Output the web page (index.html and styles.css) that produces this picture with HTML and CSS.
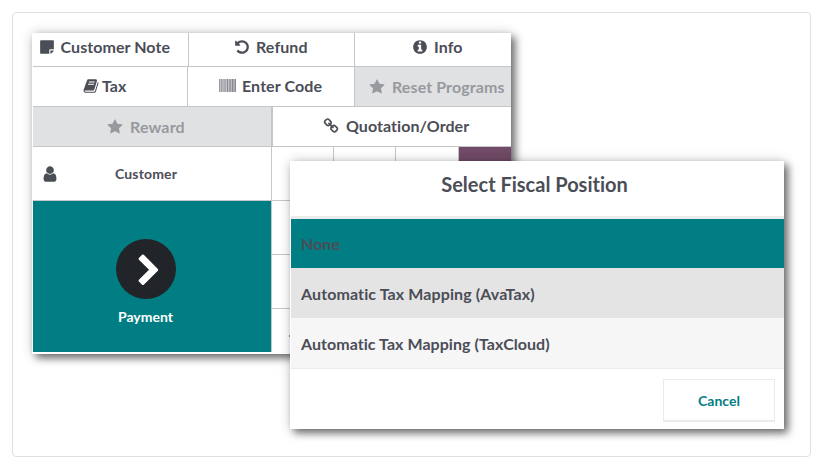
FILE: index.html
```html
<!DOCTYPE html>
<html lang="en">
<head>
<meta charset="utf-8">
<title>Point of Sale</title>
<link rel="stylesheet" href="styles.css">
</head>
<body>
<main class="frame">
  <section class="pos">
    <div class="row row-first">
      <div class="btn note"><svg class="icon" viewBox="0 0 1792 1792"><path d="M1152 1248v416h-928q-40 0-68-28t-28-68v-1344q0-40 28-68t68-28h1344q40 0 68 28t28 68v928h-416q-40 0-68 28t-28 68zm128 32h381q-15 82-65 132l-184 184q-50 50-132 65v-381z"/></svg><span>Customer Note</span></div>
      <div class="btn refund"><svg class="icon" viewBox="0 0 1792 1792"><path d="M1664 896q0 156-61 298t-164 245-245 164-298 61q-172 0-327-72.500t-264-204.500q-7-10-6.500-22.500t8.500-20.500l137-138q10-9 25-9 16 2 23 12 73 95 179 147t225 52q104 0 198.500-40.500t163.500-109.500 109.500-163.500 40.500-198.500-40.500-198.500-109.500-163.500-163.500-109.500-198.500-40.500q-98 0-188 35.500t-160 101.500l137 138q31 30 14 69-17 40-59 40h-448q-26 0-45-19t-19-45v-448q0-42 40-59 39-17 69 14l130 129q107-101 244.500-156.500t284.500-55.500q156 0 298 61t245 164 164 245 61 298z"/></svg><span>Refund</span></div>
      <div class="btn info"><svg class="icon" viewBox="0 0 1792 1792"><path d="M1152 1376v-160q0-14-9-23t-23-9h-96v-512q0-14-9-23t-23-9h-320q-14 0-23 9t-9 23v160q0 14 9 23t23 9h96v320h-96q-14 0-23 9t-9 23v160q0 14 9 23t23 9h448q14 0 23-9t9-23zm-128-896v-160q0-14-9-23t-23-9h-192q-14 0-23 9t-9 23v160q0 14 9 23t23 9h192q14 0 23-9t9-23zm640 416q0 209-103 385.500t-279.500 279.500-385.500 103-385.500-103-279.500-279.500-103-385.500 103-385.500 279.500-279.500 385.500-103 385.500 103 279.500 279.500 103 385.500z"/></svg><span>Info</span></div>
    </div>
    <div class="row row-second">
      <div class="btn tax"><svg class="icon" viewBox="0 0 1792 1792"><path d="M1703 478q40 57 18 129l-275 906q-19 64-76.500 107.500t-122.500 43.500h-923q-77 0-148.500-53.500t-99.500-131.500q-24-67-2-127 0-4 3-27t4-37q1-8-3-21.500t-3-19.500q2-11 8-21t16.500-23.500 16.500-23.500q23-38 45-91.500t30-91.500q3-10 .5-30t-.5-28q3-11 17-28t17-23q21-36 42-92t25-90q1-9-2.500-32t.5-28q4-13 22-30.500t22-22.500q19-26 42.500-84.500t27.500-96.500q1-8-3-25.500t-2-26.500q2-8 9-18t18-23 17-21q8-12 16.500-30.500t15-35 16-36 19.500-32 26.500-23.500 36-11.500 47.500 5.500l-1 3q38-9 51-9h761q74 0 114 56t18 130l-274 906q-36 119-71.500 153.500t-128.500 34.500h-869q-27 0-38 15-11 16-1 43 24 70 144 70h923q29 0 56-15.500t35-41.500l300-987q7-22 5-57 38 15 59 43zm-1064 2q-4 13 2 22.500t20 9.500h608q13 0 25.500-9.500t16.500-22.500l21-64q4-13-2-22.500t-20-9.500h-608q-13 0-25.500 9.500t-16.500 22.500zm-83 256q-4 13 2 22.500t20 9.500h608q13 0 25.500-9.500t16.500-22.500l21-64q4-13-2-22.500t-20-9.500h-608q-13 0-25.500 9.500t-16.500 22.500z"/></svg><span>Tax</span></div>
      <div class="btn code"><svg class="icon barcode" viewBox="0 0 17 13"><path opacity=".4" d="M0 0h1v13H0zM1.700 0h1.200v13H1.700zM3.500 0h1v13h-1zM5 0h.7v13H5z"/><path opacity=".55" d="M6.500 0h.7v13h-.7zM8 0h1.200v13H8zM10 0h.7v13H10zM11.300 0h1v13h-1zM13 0h1v13h-1zM14.500 0h.6v13h-.6zM15.600 0H17v13h-1.400z"/><path opacity=".25" d="M0 0h17v13H0z"/></svg><span>Enter Code</span></div>
      <div class="btn reset off"><svg class="icon" viewBox="0 0 1792 1792"><path d="M1728 647q0 22-26 48l-363 354 86 500q1 7 1 20 0 21-10.500 35.500t-30.500 14.500q-19 0-40-12l-449-236-449 236q-22 12-40 12-21 0-31.500-14.500t-10.500-35.500q0-6 2-20l86-500-364-354q-25-27-25-48 0-37 56-46l502-73 225-455q19-41 49-41t49 41l225 455 502 73q56 9 56 46z"/></svg><span>Reset Programs</span></div>
    </div>
    <div class="row row-third">
      <div class="btn reward off"><svg class="icon" viewBox="0 0 1792 1792"><path d="M1728 647q0 22-26 48l-363 354 86 500q1 7 1 20 0 21-10.500 35.500t-30.500 14.500q-19 0-40-12l-449-236-449 236q-22 12-40 12-21 0-31.500-14.500t-10.500-35.500q0-6 2-20l86-500-364-354q-25-27-25-48 0-37 56-46l502-73 225-455q19-41 49-41t49 41l225 455 502 73q56 9 56 46z"/></svg><span>Reward</span></div>
      <div class="btn order"><svg class="icon" viewBox="0 0 1792 1792"><path d="M1520 1216q0-40-28-68l-208-208q-28-28-68-28-42 0-72 32 3 3 19 18.500t21.500 21.500 15 19 13 25.500 3.500 27.500q0 40-28 68t-68 28q-15 0-27.500-3.500t-25.500-13-19-15-21.500-21.500-18.500-19q-33 31-33 73 0 40 28 68l206 207q27 27 68 27 40 0 68-26l147-146q28-28 28-67zm-703-705q0-40-28-68l-206-207q-28-28-68-28-39 0-68 27l-147 146q-28 28-28 67 0 40 28 68l208 208q27 27 68 27 42 0 72-31-3-3-19-18.500t-21.500-21.500-15-19-13-25.500-3.500-27.500q0-40 28-68t68-28q15 0 27.500 3.500t25.500 13 19 15 21.500 21.500 18.500 19q33-31 33-73zm895 705q0 120-85 203l-147 146q-83 83-203 83-121 0-204-85l-206-207q-83-83-83-203 0-123 88-209l-88-88q-86 88-208 88-120 0-204-84l-208-208q-84-84-84-204t85-203l147-146q83-83 203-83 121 0 204 85l206 207q83 83 83 203 0 123-88 209l88 88q86-88 208-88 120 0 204 84l208 208q84 84 84 204z"/></svg><span>Quotation/Order</span></div>
    </div>
    <div class="pad">
      <div class="actions">
        <div class="customer"><svg class="user" viewBox="0 0 1792 1792"><path d="M1536 1399q0 109-62.500 187t-150.500 78h-854q-88 0-150.500-78t-62.500-187q0-85 8.500-160.500t31.500-152 58.500-131 94-89 134.500-34.500q131 128 313 128t313-128q76 0 134.500 34.500t94 89 58.500 131 31.500 152 8.500 160.500zm-256-887q0 159-112.500 271.500t-271.500 112.500-271.500-112.500-112.500-271.500 112.500-271.500 271.500-112.500 271.500 112.500 112.500 271.500z"/></svg><span>Customer</span></div>
        <div class="payment">
          <div class="disc"><svg viewBox="0 0 1792 1792"><path d="M1363 877l-742 742q-19 19-45 19t-45-19l-166-166q-19-19-19-45t19-45l531-531-531-531q-19-19-19-45t19-45l166-166q19-19 45-19t45 19l742 742q19 19 19 45t-19 45z"/></svg></div>
          <span>Payment</span>
        </div>
      </div>
      <div class="keys">
        <i></i><i></i><i></i><i class="mode"></i>
        <i></i><i></i><i></i><i></i>
        <i></i><i></i><i></i><i></i>
        <i class="sign"></i><i></i><i></i><i></i>
      </div>
    </div>
  </section>
  <section class="dialog">
    <header>Select Fiscal Position</header>
    <ul>
      <li class="selected">None</li>
      <li class="hover">Automatic Tax Mapping (AvaTax)</li>
      <li>Automatic Tax Mapping (TaxCloud)</li>
    </ul>
    <footer><button>Cancel</button></footer>
  </section>
</main>
</body>
</html>
```
FILE: styles.css
```css
* { box-sizing: border-box; }
body {
  margin: 0;
  padding: 12px;
  background: #fff;
  color: #4b4d57;
  font: bold 16px/20px Lato, sans-serif;
  font-variant-ligatures: none;
}
.frame {
  position: relative;
  width: 799px;
  height: 445px;
  padding: 21px 20px;
  border: 1px solid #dee0e2;
  border-radius: 4px;
}
svg { display: block; fill: currentColor; flex: none; }
.pos {
  width: 479px;
  height: 321px;
  margin-left: -1px;
  padding-left: 1px;
  margin-top: -1px;
  background: #fff;
  box-shadow: 4px 4px 8px rgba(0, 0, 0, .55), 0 0 12px rgba(0, 0, 0, .16);
}
.row { display: flex; border-bottom: 1px solid #c5c6c8; }
.row-first { height: 34px; }
.row-second, .row-third { height: 40px; }
.btn {
  display: flex;
  align-items: center;
  border-right: 1px solid #c5c6c8;
  white-space: nowrap;
}
.btn:last-child { flex: 1; border-right: 0; }
.icon { width: 16px; height: 16px; }
.row-first .btn { padding-bottom: 5px; gap: 6px; }
.note { width: 156px; padding-left: 5.5px; letter-spacing: .07px; }
.refund { width: 166px; padding-left: 45px; letter-spacing: .1px; }
.info { padding-left: 57px; letter-spacing: .1px; }
.tax { width: 155px; padding: 0 0 2px 50px; gap: 3px; }
.code { width: 167px; padding: 0 0 2px 31px; gap: 6px; letter-spacing: .1px; }
.icon.barcode { width: 17px; height: 13px; }
.off { background: #e0e1e3; color: #97999e; }
.reset { padding: 0 0 0 14px; gap: 7px; letter-spacing: .1px; }
.reward { width: 240px; padding: 1px 0 0 74px; gap: 7px; letter-spacing: .15px; border-right-width: 2px; }
.order { padding: 0 0 2px 50px; gap: 7px; letter-spacing: .05px; }
.pad { display: flex; height: 205px; }
.actions { width: 239px; border-right: 1px solid #c5c6c8; }
.customer {
  display: flex;
  align-items: center;
  height: 54px;
  padding-left: 8px;
  gap: 56px;
  border-bottom: 1px solid #c5c6c8;
  font-size: 14px;
  letter-spacing: .15px;
}
.user { width: 18px; height: 18px; }
.payment {
  display: flex;
  flex-direction: column;
  align-items: center;
  height: 151px;
  padding: 38px 13px 0 0;
  background: #017e84;
  color: #fff;
  font-size: 14px;
  gap: 8px;
}
.disc {
  display: grid;
  place-items: center;
  width: 60px;
  height: 60px;
  padding: 4px 0 0 6px;
  border-radius: 50%;
  background: #212529;
}
.disc svg { width: 34px; height: 34px; }
.keys {
  flex: 1;
  display: grid;
  grid-template-columns: 62px 62px 63px 1fr;
  grid-template-rows: 54px 54px 54px 1fr;
}
.keys i { border: solid #c5c6c8; border-width: 0 1px 1px 0; }
.keys i:nth-child(n + 13) { border-bottom: 0; }
.keys .mode { background: #714b67; border: 0; }
.sign::before {
  content: "";
  display: block;
  width: 6px;
  height: 2px;
  margin: 26px 0 0 17px;
  background: #999;
}
.dialog {
  position: absolute;
  left: 277px;
  top: 148px;
  width: 494px;
  height: 268px;
  padding-left: 1px;
  background: #fff;
  box-shadow: 4px 4px 8px rgba(0, 0, 0, .55), 0 0 12px rgba(0, 0, 0, .16);
}
.dialog header {
  height: 58px;
  padding: 11px 6px 0 0;
  border-bottom: 3px solid #ebebeb;
  font-size: 20px;
  line-height: 25px;
  text-align: center;
}
.dialog ul { margin: 0; padding: 0; list-style: none; }
.dialog li {
  height: 51px;
  padding: 16px 10px;
  background: #f6f6f6;
  border-bottom: 1px solid #ebebeb;
  letter-spacing: .05px;
}
.dialog .selected { height: 49px; padding-top: 15px; background: #017e84; color: #4b4d57; border: 0; }
.dialog .hover { height: 50px; background: #e4e4e4; border: 0; letter-spacing: .11px; }
.dialog footer { display: flex; justify-content: flex-end; padding: 10px 9px 0 0; }
.dialog button {
  width: 112px;
  height: 43px;
  padding: 0;
  border: 2px solid #ebebeb;
  border-width: 1px 1px 2px;
  background: #fff;
  color: #017e84;
  font: bold 14px Lato, sans-serif;
}
```
